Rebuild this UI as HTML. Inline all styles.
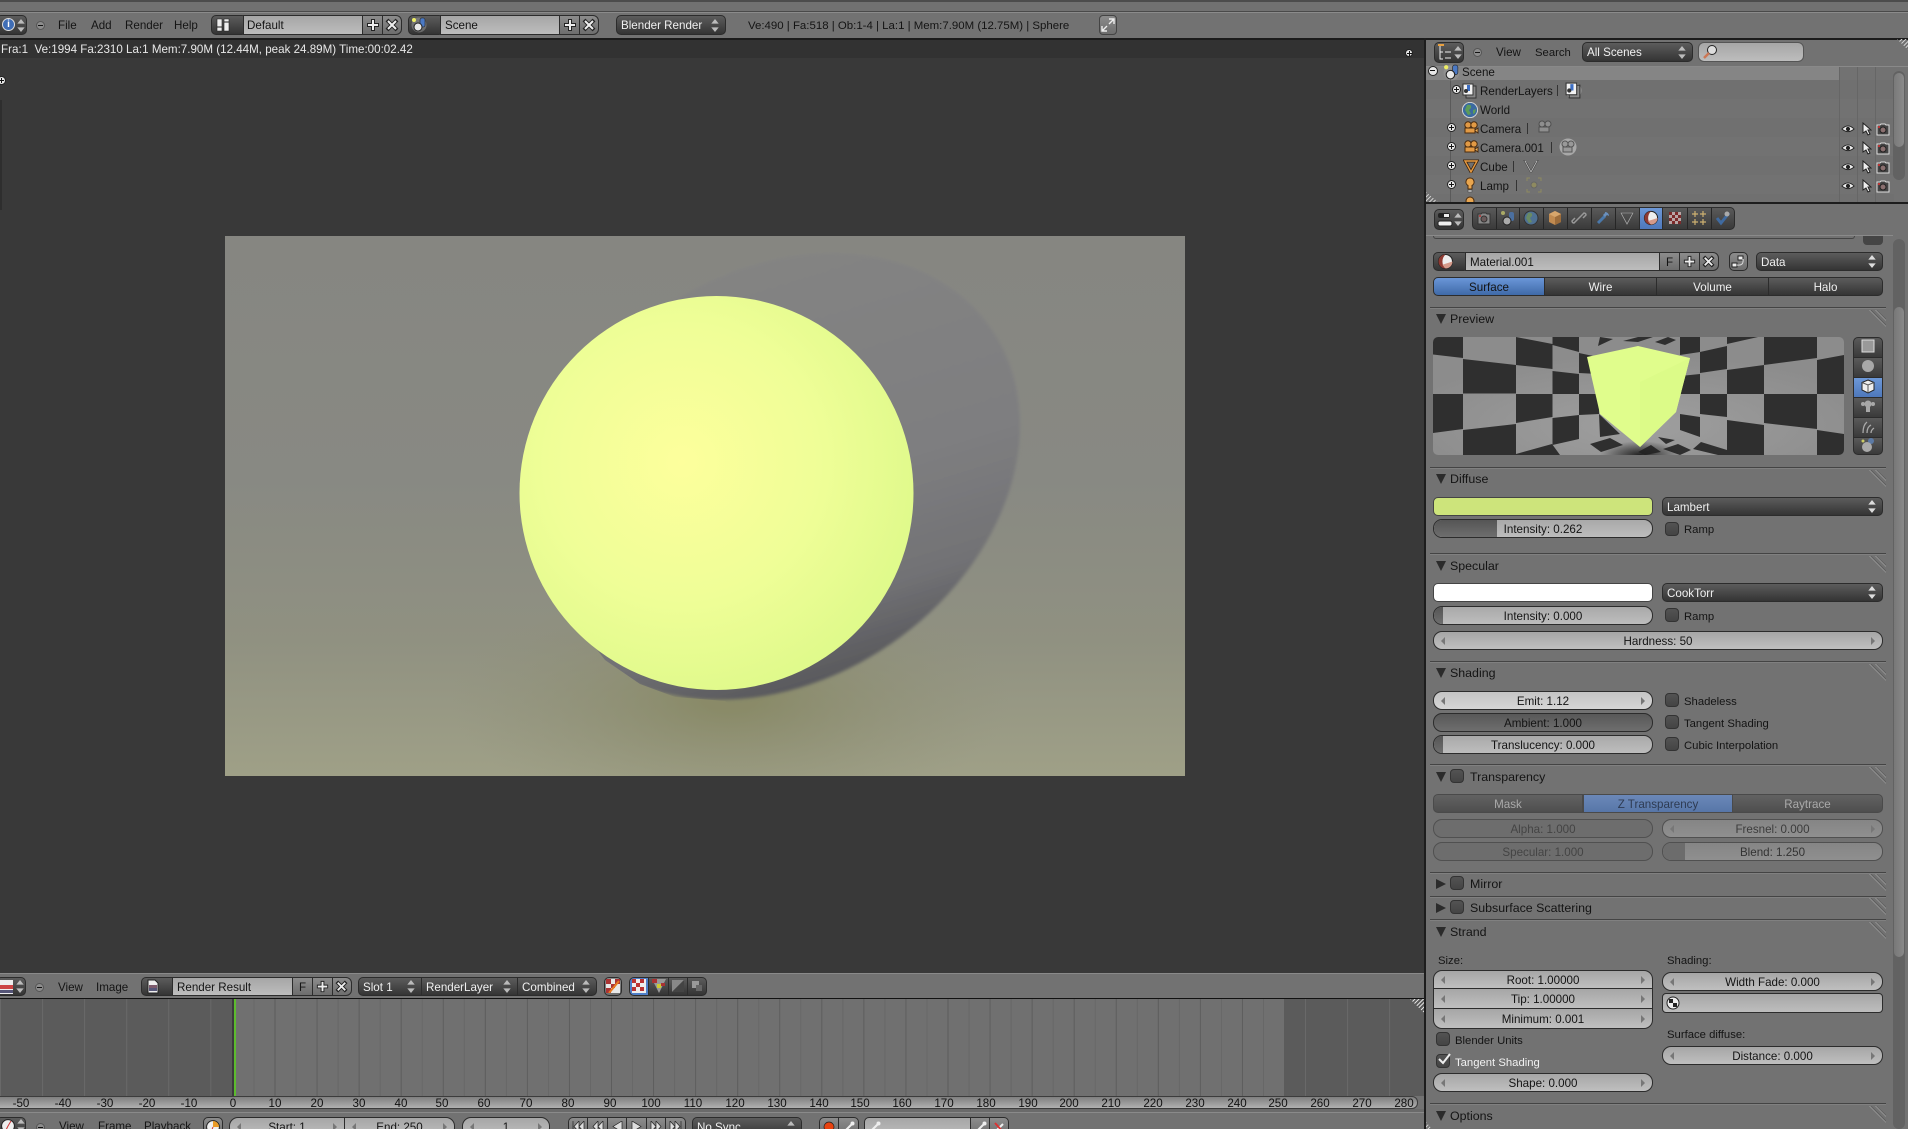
<!DOCTYPE html>
<html><head><meta charset="utf-8"><title>Blender</title>
<style>
html{margin:0;padding:0;overflow:hidden;width:1908px;height:1129px}
body{margin:0;padding:0;width:1908px;height:1129px;overflow:hidden;position:relative;background:#727272;font:11.6px/14px "Liberation Sans",sans-serif;color:#141414}
body *{position:absolute;box-sizing:border-box;white-space:nowrap}
svg *{position:static}
.t{height:14px}
.h{font-size:12.4px;margin-top:1px}
.k{font-size:11.3px;margin-top:1px}
.m{margin-top:2px}
.c{color:#f2f2f2}
.w{display:flex;align-items:center;justify-content:center;border:1px solid #2c2c2c;padding-top:2px}
.num{border-radius:9px;background:linear-gradient(#a6a6a6,#bfbfbf)}
.hi{background:linear-gradient(#c4c4c4,#d6d6d6)}
.sl{border-radius:9px;background:linear-gradient(#a9a9a9,#bdbdbd);overflow:hidden}
.sl b{left:0;top:0;bottom:0;background:linear-gradient(#555,#6e6e6e)}
.sl span{position:relative}
.dk{border-radius:5px;background:linear-gradient(#5c5c5c,#343434);color:#f0f0f0;justify-content:flex-start;padding-left:4px}
.fd{background:linear-gradient(#a6a6a6,#bdbdbd);justify-content:flex-start;padding-left:4px}
.bt{background:linear-gradient(#8c8c8c,#6d6d6d)}
.ck{width:14px;height:14px;border-radius:4px;border:1px solid #333;background:linear-gradient(#535353,#444)}
.sep{left:1430px;width:456px;height:1px;background:#444;box-shadow:0 1px 0 #808080}
.dn{width:0;height:0;border-left:5px solid transparent;border-right:5px solid transparent;border-top:10px solid #2b2b2b;left:1436px;margin-top:1px}
.rt{width:0;height:0;border-top:5px solid transparent;border-bottom:5px solid transparent;border-left:10px solid #2b2b2b;left:1436px;margin-top:1px}
.gr{left:1868px;width:18px;height:17px;background:repeating-linear-gradient(45deg,#8e8e8e 0 1px,#606060 1px 2px,transparent 2px 4.2px);clip-path:polygon(0 0,50% 0,100% 50%,100% 100%)}
.ar:before,.ar:after{content:"";position:absolute;top:50%;margin-top:-4px;border-top:4px solid transparent;border-bottom:4px solid transparent}
.ar:before{left:7px;border-right:4px solid #777}
.ar:after{right:7px;border-left:4px solid #777}
.r{top:1097px;width:40px;height:13px;line-height:14px;text-align:center;color:#111}
.row{left:1425px;width:468px;height:19px}
.dim{opacity:.55}
.pm{width:9px;height:9px;border-radius:50%;background:#e8e8e8;border:1px solid #222}
.pm:after{content:"";position:absolute;left:1px;top:3px;width:5px;height:1px;background:#111}
.pp:before{content:"";position:absolute;left:3px;top:1px;width:1px;height:5px;background:#111}
.ol{margin-top:1px}
</style></head>
<body>
<svg width="0" height="0" style="left:0;top:0">
<defs>
<symbol id="ud" viewBox="0 0 8 14"><path d="M4 0 8 5H0zM4 14 0 9h8z" fill="#ddd"/></symbol>
<symbol id="udk" viewBox="0 0 8 14"><path d="M4 0 8 5H0zM4 14 0 9h8z" fill="#bbb"/></symbol>
<symbol id="plus" viewBox="0 0 16 16"><path d="M8 2v12M2 8h12" stroke="#222" stroke-width="4"/><path d="M8 3v10M3 8h10" stroke="#eee" stroke-width="2"/></symbol>
<symbol id="x" viewBox="0 0 16 16"><path d="M3 3 13 13M13 3 3 13" stroke="#222" stroke-width="4"/><path d="M4 4 12 12M12 4 4 12" stroke="#eee" stroke-width="2"/></symbol>
<symbol id="eye" viewBox="0 0 16 10"><path d="M1 5Q8-2 15 5 8 11 1 5z" fill="#eee" stroke="#222"/><circle cx="8" cy="5" r="2.400" fill="#222"/></symbol>
<symbol id="cur" viewBox="0 0 10 14"><path d="M1 1v10l3-2 2 4 2-1-2-4h3z" fill="#eee" stroke="#222"/></symbol>
<symbol id="rcam" viewBox="0 0 14 14"><path d="M1 3h3l1-1h4l1 1h3v10H1z" fill="#444" stroke="#ddd"/><circle cx="7" cy="8" r="3" fill="#8a7070" stroke="#222"/><rect x="2" y="4" width="2" height="2" fill="#b33"/></symbol>
<symbol id="ocam" viewBox="0 0 16 14"><circle cx="5" cy="4" r="3.200" fill="#e29a45" stroke="#4a2c10"/><circle cx="11" cy="4" r="3.200" fill="#e29a45" stroke="#4a2c10"/><path d="M2 7h10v5H2z" fill="#e29a45" stroke="#4a2c10"/><path d="M12 9l3-2v5l-3-2z" fill="#f1b35f" stroke="#4a2c10"/></symbol>
<symbol id="scene" viewBox="0 0 16 16"><circle cx="8" cy="8" r="7.500" fill="#9a9a9a" opacity=".5"/><circle cx="3" cy="3" r="2" fill="#ee6"/><rect x="9" y="1" width="5" height="9" rx="2" fill="#4b79c4" stroke="#222" stroke-width=".6"/><circle cx="7" cy="10" r="4" fill="#e8e8e8" stroke="#222"/></symbol>
<symbol id="rl" viewBox="0 0 16 16"><rect x="4" y="3" width="10" height="12" fill="#888" stroke="#333"/><rect x="1" y="1" width="10" height="11" fill="#f2f2f2" stroke="#333"/><rect x="5" y="2" width="3" height="6" fill="#3d6fc4"/><circle cx="4" cy="8" r="2" fill="#333"/></symbol>
<symbol id="world" viewBox="0 0 16 16"><circle cx="8" cy="8" r="7.600" fill="#3b6aa0" stroke="#d5d5d5"/><path d="M5 3Q10 2 9 6L7 8 9 12 6 13 3 8z" fill="#5d9c58"/><path d="M11 8l3-1-1 4-2 1z" fill="#5d9c58"/></symbol>
<symbol id="tri" viewBox="0 0 16 14"><path d="M2 2h12L8 13z" fill="none" stroke="#3a2410" stroke-width="3"/><path d="M2 2h12L8 13z" fill="none" stroke="#e79b42" stroke-width="1.400"/></symbol>
<symbol id="tg" viewBox="0 0 16 14"><path d="M2 2h12L8 13z" fill="none" stroke="#444" stroke-width="2"/><path d="M2 2h12L8 13z" fill="none" stroke="#bbb" stroke-width=".8"/></symbol>
<symbol id="lamp" viewBox="0 0 10 16"><path d="M5 1a4 4 0 0 1 2 7.500V12H3V8.500A4 4 0 0 1 5 1z" fill="#e9a64f" stroke="#4a2c10"/><path d="M3 13h4v2H3z" fill="#ccc" stroke="#444" stroke-width=".6"/></symbol>
<symbol id="ball" viewBox="0 0 16 16"><circle cx="8" cy="8" r="6.600" fill="#eee" stroke="#222"/><path d="M8 1.400A6.600 6.600 0 0 0 1.400 8 6.600 6.600 0 0 0 8 14.600 9 9 0 0 1 8 1.400z" fill="#8f3a32"/><path d="M14.600 8A6.600 6.600 0 0 1 8 14.600L5 11z" fill="#d59a8a"/></symbol>
<symbol id="wfx" viewBox="0 0 16 16"><path d="M3 13 10 6" stroke="#5a8fd0" stroke-width="3"/><path d="M10 2a4 4 0 0 1 4 4l-2-1-2 2-2-2 2-2z" fill="#7ea9df"/></symbol>
</defs></svg>

<!-- window top -->
<div style="left:0;top:0;width:1908px;height:2px;background:#4c4c4c"></div>
<div style="left:0;top:2px;width:1908px;height:9px;background:#717171"></div>
<div style="left:0;top:11px;width:1908px;height:1px;background:#4a4a4a"></div>
<div style="left:0;top:12px;width:1908px;height:1px;background:#8b8b8b"></div>

<!-- top header -->
<div class="w dk" style="left:-4px;top:15px;width:31px;height:20px"></div>
<div style="left:2px;top:18px;width:13px;height:13px;border-radius:50%;background:#3f6db5;border:1px solid #ddd;color:#fff;font-weight:bold;font-size:10px;line-height:11px;text-align:center">i</div>
<svg style="left:17px;top:19px" width="8" height="13"><use href="#udk"/></svg>
<div class="pm" style="left:36px;top:21px;background:#8c8c8c;border-color:#555"></div>
<div class="t" style="left:58px;top:19px">File</div>
<div class="t" style="left:91px;top:19px">Add</div>
<div class="t" style="left:125px;top:19px">Render</div>
<div class="t" style="left:174px;top:19px">Help</div>

<div class="w dk" style="left:211px;top:15px;width:36px;height:20px"></div>
<svg style="left:216px;top:18px" width="14" height="14"><path d="M1 1h5v12H1zM8 1h5v12H8z" fill="#eee" stroke="#222" stroke-width=".6"/><path d="M1 9h5M8 4h5" stroke="#222"/></svg>
<div class="w fd" style="left:243px;top:15px;width:120px;height:20px;padding-left:3px">Default</div>
<div class="w bt" style="left:362px;top:15px;width:21px;height:20px"><svg style="left:2px;top:1px" width="16" height="16"><use href="#plus"/></svg></div>
<div class="w bt" style="left:382px;top:15px;width:20px;height:20px;border-radius:0 6px 6px 0"><svg style="left:1px;top:1px" width="16" height="16"><use href="#x"/></svg></div>

<div class="w dk" style="left:408px;top:15px;width:36px;height:20px"></div>
<svg style="left:411px;top:17px" width="16" height="16"><use href="#scene"/></svg>
<div class="w fd" style="left:440px;top:15px;width:120px;height:20px">Scene</div>
<div class="w bt" style="left:559px;top:15px;width:21px;height:20px"><svg style="left:2px;top:1px" width="16" height="16"><use href="#plus"/></svg></div>
<div class="w bt" style="left:579px;top:15px;width:20px;height:20px;border-radius:0 6px 6px 0"><svg style="left:1px;top:1px" width="16" height="16"><use href="#x"/></svg></div>

<div class="w dk" style="left:616px;top:15px;width:110px;height:20px">Blender Render<svg style="right:6px;top:3px" width="8" height="13"><use href="#udk"/></svg></div>
<div class="t" style="left:748px;top:19px;font-size:11.45px">Ve:490 | Fa:518 | Ob:1-4 | La:1 | Mem:7.90M (12.75M) | Sphere</div>
<div class="w bt" style="left:1099px;top:15px;width:18px;height:20px;border-radius:4px;border-color:#444"><svg style="left:1px;top:2px" width="14" height="14"><path d="M8 1h5v5M13 1 8 6M6 13H1V8M1 13l5-5" stroke="#eee" stroke-width="1.400" fill="none"/></svg></div>

<div style="left:0;top:38px;width:1908px;height:2px;background:#1b1b1b"></div>

<!-- image editor -->
<div style="left:0;top:40px;width:1424px;height:933px;background:#393939"></div>
<div style="left:0;top:40px;width:1424px;height:18px;background:#323232"></div>
<div class="t c" style="left:1px;top:43px;color:#e8e8e8">Fra:1&nbsp; Ve:1994 Fa:2310 La:1 Mem:7.90M (12.44M, peak 24.89M) Time:00:02.42</div>
<div class="pm pp" style="left:1405px;top:49px;width:8px;height:8px"></div>
<div class="pm pp" style="left:-3px;top:76px;width:9px;height:9px"></div>
<div style="left:0;top:100px;width:2px;height:110px;background:#2e2e2e"></div>

<!-- render -->
<svg style="left:225px;top:236px" width="960" height="540" viewBox="225 236 960 540">
<defs>
<linearGradient id="bg" x1="0" y1="0" x2="0" y2="1"><stop offset="0" stop-color="#868681"/><stop offset=".45" stop-color="#888983"/><stop offset=".75" stop-color="#909181"/><stop offset="1" stop-color="#9fa087"/></linearGradient>
<linearGradient id="sh" gradientUnits="userSpaceOnUse" x1="880" y1="260" x2="740" y2="702"><stop offset="0" stop-color="#848483"/><stop offset=".55" stop-color="#7e7e80"/><stop offset=".8" stop-color="#727275"/><stop offset="1" stop-color="#535357"/></linearGradient>
<radialGradient id="amb" gradientUnits="userSpaceOnUse" cx="0" cy="0" r="1" gradientTransform="translate(730 700) scale(280 120)"><stop offset=".1" stop-color="#85865f" stop-opacity=".75"/><stop offset="1" stop-color="#8f9078" stop-opacity="0"/></radialGradient>
<radialGradient id="sp" gradientUnits="userSpaceOnUse" cx="682" cy="462" r="250"><stop offset="0" stop-color="#fdff9c"/><stop offset=".55" stop-color="#effe97"/><stop offset="1" stop-color="#def98a"/></radialGradient>
<clipPath id="shc"><polygon points="578,625 605,660 640,684 675,697 725,701 800,760 1100,760 1100,240 578,240"/></clipPath>
<filter id="sb" x="-5%" y="-5%" width="110%" height="110%"><feGaussianBlur stdDeviation="1.500"/></filter>
</defs>
<rect x="225" y="236" width="960" height="540" fill="url(#bg)"/>
<rect x="225" y="560" width="960" height="216" fill="url(#amb)"/>
<g clip-path="url(#shc)"><ellipse cx="776" cy="476.500" rx="261" ry="203" transform="rotate(-34.500 776 476.500)" fill="url(#sh)" filter="url(#sb)"/></g>
<circle cx="716.500" cy="493" r="197" fill="url(#sp)"/>
</svg>

<!-- image editor header -->
<div style="left:0;top:973px;width:1424px;height:1px;background:#8a8a8a"></div>
<div style="left:0;top:974px;width:1424px;height:24px;background:#727272"></div>
<div class="w dk" style="left:-4px;top:977px;width:30px;height:19px"></div>
<svg style="left:0;top:980px" width="13" height="14"><rect width="13" height="14" fill="#eee"/><path d="M0 5h13v4H0z" fill="#c44"/><path d="M0 10h13v3H0z" fill="#557"/></svg>
<svg style="left:16px;top:980px" width="8" height="13"><use href="#udk"/></svg>
<div class="pm" style="left:35px;top:983px;background:#8c8c8c;border-color:#555"></div>
<div class="t" style="left:58px;top:981px">View</div>
<div class="t" style="left:96px;top:981px">Image</div>
<div class="w dk" style="left:141px;top:977px;width:36px;height:19px"></div>
<svg style="left:147px;top:979px" width="12" height="15"><path d="M1 1h7l3 3v10H1z" fill="#eee" stroke="#222"/><path d="M2 6h8v3H2z" fill="#7c5a6c"/><path d="M2 9h8v3H2z" fill="#557"/></svg>
<div class="w fd" style="left:172px;top:977px;width:121px;height:19px">Render Result</div>
<div class="w bt" style="left:292px;top:977px;width:21px;height:19px">F</div>
<div class="w bt" style="left:312px;top:977px;width:21px;height:19px"><svg style="left:2px;top:1px" width="15" height="15"><use href="#plus"/></svg></div>
<div class="w bt" style="left:332px;top:977px;width:20px;height:19px;border-radius:0 6px 6px 0"><svg style="left:1px;top:1px" width="15" height="15"><use href="#x"/></svg></div>
<div class="w dk" style="left:358px;top:977px;width:64px;height:19px;border-radius:5px 0 0 5px">Slot 1<svg style="right:6px;top:2px" width="8" height="13"><use href="#udk"/></svg></div>
<div class="w dk" style="left:421px;top:977px;width:97px;height:19px;border-radius:0">RenderLayer<svg style="right:6px;top:2px" width="8" height="13"><use href="#udk"/></svg></div>
<div class="w dk" style="left:517px;top:977px;width:80px;height:19px;border-radius:0 5px 5px 0">Combined<svg style="right:6px;top:2px" width="8" height="13"><use href="#udk"/></svg></div>
<div class="w bt" style="left:604px;top:977px;width:18px;height:19px;border-radius:5px"><svg style="left:1px;top:1px" width="14" height="14"><rect width="14" height="14" fill="#e8e8e8"/><path d="M0 0h5v5H0zM5 5h4v4H5zM0 9h5v5H0zM9 0h5v5H9z" fill="#a33"/><path d="M3 14 13 2" stroke="#e87a20" stroke-width="2"/></svg></div>
<div class="w" style="left:629px;top:977px;width:20px;height:19px;background:#4f7fc9;border-radius:5px 0 0 5px"><svg style="left:2px;top:1px" width="14" height="14"><rect width="14" height="14" fill="#eee"/><path d="M0 0h4v4H0zM8 0h4v4H8zM4 4h4v4H4zM0 8h4v4H0zM8 8h4v4H8z" fill="#b33"/></svg></div>
<div class="w dk" style="left:648px;top:977px;width:21px;height:19px;border-radius:0"><svg style="left:3px;top:1px" width="14" height="14"><path d="M0 0h14L7 14z" fill="#999"/><path d="M0 0h5v4H0zM9 4h4v3H9z" fill="#a33"/><path d="M5 5h4v4H5z" fill="#cc3"/></svg></div>
<div class="w dk" style="left:668px;top:977px;width:20px;height:19px;border-radius:0"><svg style="left:2px;top:1px" width="14" height="14"><path d="M1 13V1h12z" fill="#888"/><path d="M13 1v12H1z" fill="#444"/></svg></div>
<div class="w dk" style="left:687px;top:977px;width:20px;height:19px;border-radius:0 5px 5px 0"><svg style="left:2px;top:1px" width="14" height="14"><rect x="2" y="2" width="7" height="7" fill="#999"/><rect x="6" y="6" width="6" height="6" fill="#666"/></svg></div>
<div style="left:0;top:998px;width:1424px;height:1px;background:#111"></div>

<!-- timeline -->
<div style="left:0;top:999px;width:233px;height:97px;background:#5b5b5b linear-gradient(90deg,#696969 1px,transparent 1px) 0 0/42.070px 100%"></div>
<div style="left:233px;top:999px;width:1051px;height:97px;background-color:#707070;background-image:linear-gradient(90deg,#5d5d5d 1px,transparent 1px),linear-gradient(90deg,#676767 1px,transparent 1px);background-size:42.070px 100%,42.070px 100%;background-position:41.500px 0,20.500px 0"></div>
<div style="left:1284px;top:999px;width:140px;height:97px;background:#5b5b5b linear-gradient(90deg,#696969 1px,transparent 1px) 21px 0/42.070px 100%"></div>
<div style="left:232px;top:999px;width:2px;height:97px;background:#3c3c3c"></div>
<div style="left:234px;top:999px;width:2px;height:97px;background:#5dbb2e"></div>
<div class="w" style="left:-8px;top:1096px;width:1426px;height:13px;border-radius:6px;background:linear-gradient(#7f7f7f,#b0b0b0);border-color:#3c3c3c"></div>
<div class="r" style="left:1px">-50</div><div class="r" style="left:43px">-40</div><div class="r" style="left:85px">-30</div><div class="r" style="left:127px">-20</div><div class="r" style="left:169px">-10</div><div class="r" style="left:213px">0</div>
<div class="r" style="left:255px">10</div><div class="r" style="left:297px">20</div><div class="r" style="left:339px">30</div><div class="r" style="left:381px">40</div><div class="r" style="left:422px">50</div><div class="r" style="left:464px">60</div><div class="r" style="left:506px">70</div><div class="r" style="left:548px">80</div><div class="r" style="left:590px">90</div><div class="r" style="left:631px">100</div><div class="r" style="left:673px">110</div><div class="r" style="left:715px">120</div><div class="r" style="left:757px">130</div><div class="r" style="left:799px">140</div><div class="r" style="left:840px">150</div><div class="r" style="left:882px">160</div><div class="r" style="left:924px">170</div><div class="r" style="left:966px">180</div><div class="r" style="left:1008px">190</div><div class="r" style="left:1049px">200</div><div class="r" style="left:1091px">210</div><div class="r" style="left:1133px">220</div><div class="r" style="left:1175px">230</div><div class="r" style="left:1217px">240</div><div class="r" style="left:1258px">250</div><div class="r" style="left:1300px">260</div><div class="r" style="left:1342px">270</div><div class="r" style="left:1384px">280</div>
<div style="left:0;top:1109px;width:1424px;height:5px;background:#6a6a6a"></div>
<div style="left:0;top:1112px;width:1424px;height:1px;background:#8a8a8a"></div>
<div style="left:0;top:1113px;width:1424px;height:16px;background:#727272"></div>
<div class="w dk" style="left:-4px;top:1117px;width:30px;height:20px"></div>
<svg style="left:1px;top:1119px" width="14" height="14"><circle cx="7" cy="7" r="6.400" fill="#eee" stroke="#222"/><path d="M7 7 10 2M7 7 5 11" stroke="#c33"/></svg>
<svg style="left:17px;top:1119px" width="8" height="13"><use href="#udk"/></svg>
<div class="pm" style="left:36px;top:1123px;background:#8c8c8c;border-color:#555"></div>
<div class="t" style="left:59px;top:1120px">View</div>
<div class="t" style="left:98px;top:1120px">Frame</div>
<div class="t" style="left:144px;top:1120px">Playback</div>
<div class="w bt" style="left:203px;top:1117px;width:20px;height:20px;border-radius:5px"><svg style="left:2px;top:2px" width="14" height="14"><circle cx="7" cy="7" r="6.400" fill="#eee" stroke="#222"/><path d="M7 7V1a6 6 0 0 1 6 6z" fill="#ea9a25"/><path d="M7 7 5 12" stroke="#c33"/></svg></div>
<div class="w num ar" style="left:229px;top:1117px;width:116px;height:20px;border-radius:9px 0 0 9px">Start: 1</div>
<div class="w num ar" style="left:344px;top:1117px;width:111px;height:20px;border-radius:0 9px 9px 0">End: 250</div>
<div class="w num ar" style="left:462px;top:1117px;width:88px;height:20px">1</div>
<div class="w bt" style="left:568px;top:1117px;width:20px;height:20px;border-radius:5px 0 0 5px"><svg style="left:3px;top:3px" width="13" height="11"><path d="M1 0v11M12 0 7 5.500 12 11zM7 0 2 5.500 7 11z" fill="#ddd" stroke="#222" stroke-width=".7"/></svg></div>
<div class="w bt" style="left:587px;top:1117px;width:21px;height:20px"><svg style="left:3px;top:3px" width="13" height="11"><path d="M7 0 2 5.500 7 11zM12 0 7 5.500 12 11z" fill="#ddd" stroke="#222" stroke-width=".7"/></svg></div>
<div class="w bt" style="left:607px;top:1117px;width:20px;height:20px"><svg style="left:4px;top:3px" width="11" height="11"><path d="M10 0 1 5.500 10 11z" fill="#ddd" stroke="#222" stroke-width=".7"/></svg></div>
<div class="w bt" style="left:626px;top:1117px;width:21px;height:20px"><svg style="left:4px;top:3px" width="11" height="11"><path d="M1 0 10 5.500 1 11z" fill="#ddd" stroke="#222" stroke-width=".7"/></svg></div>
<div class="w bt" style="left:646px;top:1117px;width:20px;height:20px"><svg style="left:3px;top:3px" width="13" height="11"><path d="M1 0 6 5.500 1 11zM6 0l5 5.500L6 11z" fill="#ddd" stroke="#222" stroke-width=".7"/></svg></div>
<div class="w bt" style="left:665px;top:1117px;width:21px;height:20px;border-radius:0 5px 5px 0"><svg style="left:3px;top:3px" width="13" height="11"><path d="M12 0v11M1 0 6 5.500 1 11zM6 0l5 5.500L6 11z" fill="#ddd" stroke="#222" stroke-width=".7"/></svg></div>
<div class="w dk" style="left:692px;top:1117px;width:110px;height:20px;padding-top:1px">No Sync<svg style="right:6px;top:3px" width="8" height="13"><use href="#udk"/></svg></div>
<div class="w bt" style="left:819px;top:1117px;width:20px;height:20px;border-radius:5px 0 0 5px"><svg style="left:3px;top:3px" width="12" height="12"><circle cx="6" cy="6" r="5" fill="#e8420f" stroke="#222" stroke-width=".7"/></svg></div>
<div class="w bt" style="left:838px;top:1117px;width:21px;height:20px;border-radius:0 5px 5px 0"><svg style="left:3px;top:3px" width="13" height="13"><path d="M2 11 10 3" stroke="#eee" stroke-width="2"/><circle cx="10.500" cy="2.500" r="2" fill="#eee"/><circle cx="2.500" cy="10.500" r="2" fill="none" stroke="#eee"/></svg></div>
<div class="w fd" style="left:864px;top:1117px;width:107px;height:20px;border-radius:5px 0 0 5px"><svg style="left:3px;top:3px" width="13" height="13"><path d="M2 11 10 3" stroke="#eee" stroke-width="2"/><circle cx="10.500" cy="2.500" r="2" fill="#eee"/><circle cx="2.500" cy="10.500" r="2" fill="none" stroke="#eee"/></svg></div>
<div class="w bt" style="left:970px;top:1117px;width:20px;height:20px"><svg style="left:3px;top:3px" width="13" height="13"><path d="M2 11 10 3" stroke="#eee" stroke-width="2"/><circle cx="10.500" cy="2.500" r="2" fill="#eee"/></svg></div>
<div class="w bt" style="left:989px;top:1117px;width:20px;height:20px;border-radius:0 5px 5px 0"><svg style="left:3px;top:3px" width="13" height="13"><path d="M2 11 10 3" stroke="#eee" stroke-width="2"/><path d="M2 2 11 12" stroke="#d33" stroke-width="2"/></svg></div>

<!-- hatch corners -->
<div style="left:1410px;top:999px;width:14px;height:14px;background:repeating-linear-gradient(135deg,#ddd 0 1px,transparent 1px 3px);clip-path:polygon(0 0,100% 0,100% 100%)"></div>

<!-- column divider -->
<div style="left:1424px;top:38px;width:2px;height:1091px;background:#1d1d1d"></div>

<!-- outliner -->
<div style="left:1426px;top:40px;width:482px;height:162px;background:#727272"></div>
<div style="left:1426px;top:66px;width:482px;height:1px;background:#898989"></div>
<div class="row" style="top:67px;left:1426px;width:414px;height:13px;background:#858585"></div>
<div class="row" style="top:80px;left:1426px;height:19px;background:#707070"></div>
<div class="row" style="top:118px;left:1426px;background:#707070"></div>
<div class="row" style="top:156px;left:1426px;background:#707070"></div>
<div class="row" style="top:194px;left:1426px;height:8px;background:#707070"></div>
<div style="left:1839px;top:67px;width:1px;height:135px;background:#666"></div>
<div style="left:1857px;top:67px;width:1px;height:135px;background:#666"></div>
<div style="left:1875px;top:67px;width:1px;height:135px;background:#666"></div>
<div class="w dk" style="left:1434px;top:42px;width:30px;height:21px"></div>
<svg style="left:1437px;top:44px" width="16" height="17"><path d="M1 1h6" stroke="#e8a040" stroke-width="2"/><path d="M3 2v13h3M3 8h3M8 8h6M8 14h6" stroke="#eee" fill="none"/></svg>
<svg style="left:1454px;top:46px" width="8" height="13"><use href="#udk"/></svg>
<div class="pm" style="left:1473px;top:48px;background:#8c8c8c;border-color:#555"></div>
<div class="t" style="left:1496px;top:46px">View</div>
<div class="t" style="left:1535px;top:46px;font-size:11.3px">Search</div>
<div class="w dk" style="left:1582px;top:42px;width:111px;height:20px">All Scenes<svg style="right:6px;top:3px" width="8" height="13"><use href="#udk"/></svg></div>
<div class="w fd" style="left:1698px;top:42px;width:106px;height:20px;border-radius:6px;border-color:#555"><svg style="left:3px;top:1px" width="16" height="16"><circle cx="10" cy="6" r="4.500" fill="#ddd" stroke="#222"/><path d="M7 9 2 14" stroke="#c75" stroke-width="2.500"/></svg></div>

<div style="left:1450px;top:76px;width:1px;height:126px;background:#5a5a5a"></div>
<div class="pm" style="left:1428px;top:66px;width:10px;height:10px"></div>
<svg style="left:1443px;top:64px" width="17" height="17"><use href="#scene"/></svg>
<div class="t ol" style="left:1462px;top:65px">Scene</div>
<div class="pm pp" style="left:1452px;top:85px"></div>
<svg style="left:1462px;top:83px" width="16" height="16"><use href="#rl"/></svg>
<div class="t ol" style="left:1480px;top:84px">RenderLayers</div>
<div style="left:1557px;top:85px;width:1px;height:11px;background:#333"></div>
<svg style="left:1565px;top:82px" width="17" height="17"><circle cx="8.500" cy="8.500" r="8" fill="#9c9c9c"/><use href="#rl"/></svg>
<svg style="left:1462px;top:102px" width="16" height="16"><use href="#world"/></svg>
<div class="t ol" style="left:1480px;top:103px">World</div>
<div class="pm pp" style="left:1447px;top:123px"></div>
<svg style="left:1463px;top:121px" width="16" height="14"><use href="#ocam"/></svg>
<div class="t ol" style="left:1480px;top:122px">Camera</div>
<div style="left:1527px;top:123px;width:1px;height:11px;background:#333"></div>
<svg style="left:1537px;top:120px;opacity:.75" width="17" height="16"><path d="M2 7h10v5H2z" fill="#999" stroke="#444"/><circle cx="5" cy="4" r="3" fill="#999" stroke="#444"/><circle cx="11" cy="4" r="3" fill="#999" stroke="#444"/></svg>
<div class="pm pp" style="left:1447px;top:142px"></div>
<svg style="left:1463px;top:140px" width="16" height="14"><use href="#ocam"/></svg>
<div class="t ol" style="left:1480px;top:141px">Camera.001</div>
<div style="left:1551px;top:142px;width:1px;height:11px;background:#333"></div>
<svg style="left:1559px;top:138px" width="18" height="18"><circle cx="9" cy="9" r="8.500" fill="#a8a8a8"/><path d="M4 9h9v5H4z" fill="#999" stroke="#555"/><circle cx="6" cy="6" r="3" fill="#999" stroke="#555"/><circle cx="12" cy="6" r="3" fill="#999" stroke="#555"/></svg>
<div class="pm pp" style="left:1447px;top:161px"></div>
<svg style="left:1463px;top:159px" width="16" height="14"><use href="#tri"/></svg>
<div class="t ol" style="left:1480px;top:160px">Cube</div>
<div style="left:1513px;top:161px;width:1px;height:11px;background:#333"></div>
<svg style="left:1523px;top:159px" width="16" height="14"><use href="#tg"/></svg>
<div class="pm pp" style="left:1447px;top:180px"></div>
<svg style="left:1465px;top:177px" width="10" height="16"><use href="#lamp"/></svg>
<div class="t ol" style="left:1480px;top:179px">Lamp</div>
<div style="left:1516px;top:180px;width:1px;height:11px;background:#333"></div>
<svg style="left:1526px;top:177px" width="16" height="16"><path d="M1 4V1h3M12 1h3v3M15 12v3h-3M4 15H1v-3" stroke="#8e8a60" fill="none"/><circle cx="8" cy="8" r="3" fill="#8e8a60" stroke="#666"/></svg>
<svg style="left:1465px;top:196px" width="10" height="6"><circle cx="5" cy="5" r="4" fill="#e9a64f" stroke="#4a2c10"/></svg>
<svg style="left:1841px;top:124px" width="14" height="10"><use href="#eye"/></svg>
<svg style="left:1862px;top:122px" width="10" height="14"><use href="#cur"/></svg>
<svg style="left:1876px;top:122px" width="14" height="14"><use href="#rcam"/></svg>
<svg style="left:1841px;top:143px" width="14" height="10"><use href="#eye"/></svg>
<svg style="left:1862px;top:141px" width="10" height="14"><use href="#cur"/></svg>
<svg style="left:1876px;top:141px" width="14" height="14"><use href="#rcam"/></svg>
<svg style="left:1841px;top:162px" width="14" height="10"><use href="#eye"/></svg>
<svg style="left:1862px;top:160px" width="10" height="14"><use href="#cur"/></svg>
<svg style="left:1876px;top:160px" width="14" height="14"><use href="#rcam"/></svg>
<svg style="left:1841px;top:181px" width="14" height="10"><use href="#eye"/></svg>
<svg style="left:1862px;top:179px" width="10" height="14"><use href="#cur"/></svg>
<svg style="left:1876px;top:179px" width="14" height="14"><use href="#rcam"/></svg>
<div style="left:1893px;top:71px;width:12px;height:109px;border-radius:6px;background:#626262"></div>
<div style="left:1894px;top:73px;width:10px;height:74px;border-radius:5px;background:linear-gradient(90deg,#7a7a7a,#8a8a8a)"></div>
<div style="left:1426px;top:192px;width:12px;height:10px;background:repeating-linear-gradient(135deg,#ccc 0 1px,transparent 1px 3px);clip-path:polygon(0 0,100% 100%,0 100%)"></div>
<div style="left:1897px;top:39px;width:11px;height:11px;background:repeating-linear-gradient(135deg,#ccc 0 1px,transparent 1px 3px);clip-path:polygon(0 0,100% 0,100% 100%)"></div>

<!-- properties -->
<div style="left:1426px;top:202px;width:482px;height:2px;background:#1d1d1d"></div>
<div class="w dk" style="left:1434px;top:209px;width:30px;height:21px"></div>
<svg style="left:1437px;top:212px" width="16" height="15"><rect x="1" y="1" width="12" height="5" rx="2" fill="#222"/><rect x="7" y="2" width="5" height="3" fill="#eee"/><rect x="1" y="9" width="14" height="5" rx="2" fill="#eee" stroke="#222"/></svg>
<svg style="left:1454px;top:213px" width="8" height="13"><use href="#udk"/></svg>
<div class="w dk" style="left:1472px;top:207px;width:263px;height:23px;background:linear-gradient(#5a5a5a,#3a3a3a)"></div>
<div style="left:1639px;top:207px;width:24px;height:23px;background:linear-gradient(#6d98d8,#4e78bb);border:1px solid #2c2c2c"></div>
<div style="left:1496px;top:208px;width:1px;height:21px;background:#262626"></div><div style="left:1519px;top:208px;width:1px;height:21px;background:#262626"></div><div style="left:1543px;top:208px;width:1px;height:21px;background:#262626"></div><div style="left:1567px;top:208px;width:1px;height:21px;background:#262626"></div><div style="left:1591px;top:208px;width:1px;height:21px;background:#262626"></div><div style="left:1615px;top:208px;width:1px;height:21px;background:#262626"></div><div style="left:1687px;top:208px;width:1px;height:21px;background:#262626"></div><div style="left:1711px;top:208px;width:1px;height:21px;background:#262626"></div>
<svg style="left:1477px;top:211px" width="14" height="14"><path d="M1 3h3l1-1h4l1 1h3v10H1z" fill="#888" stroke="#333"/><circle cx="7" cy="8" r="3" fill="#6a5a5a" stroke="#333"/><rect x="2" y="4" width="2" height="2" fill="#a44"/></svg>
<svg style="left:1500px;top:210px" width="16" height="16"><circle cx="3" cy="3" r="2" fill="#aa6"/><rect x="9" y="2" width="5" height="9" rx="2" fill="#4b6f9f"/><circle cx="7" cy="11" r="4" fill="#aaa" stroke="#222"/></svg>
<svg style="left:1523px;top:210px" width="16" height="16"><circle cx="8" cy="8" r="7" fill="#4f7193" stroke="#333"/><path d="M5 3Q10 2 9 6L7 8 9 12 6 13 3 8z" fill="#698a62"/></svg>
<svg style="left:1547px;top:210px" width="16" height="16"><path d="M8 1 14 4v8l-6 3-6-3V4z" fill="#c08a50"/><path d="M8 7 14 4v8l-6 3z" fill="#9c6c3b"/><path d="M8 1 14 4 8 7 2 4z" fill="#d7a66c"/></svg>
<svg style="left:1571px;top:210px" width="16" height="16"><path d="M6 10 3 13a2 2 0 0 1-2-2l3-3M10 6l3-3a2 2 0 0 1 2 2l-3 3M5 11l6-6" stroke="#999" stroke-width="1.500" fill="none"/></svg>
<svg style="left:1595px;top:210px" width="16" height="16"><path d="M3 13 10 6" stroke="#4a78aa" stroke-width="3"/><path d="M10 2a4 4 0 0 1 4 4l-2-1-2 2-2-2 2-2z" fill="#6a90bd"/></svg>
<svg style="left:1619px;top:211px;opacity:.8" width="16" height="14"><use href="#tg"/></svg>
<svg style="left:1643px;top:210px" width="16" height="16"><use href="#ball"/></svg>
<svg style="left:1667px;top:210px" width="16" height="16"><rect x="2" y="2" width="12" height="12" fill="#b8a5a5"/><path d="M2 2h3v3H2zM8 2h3v3H8zM5 5h3v3H5zM11 5h3v3h-3zM2 8h3v3H2zM8 8h3v3H8zM5 11h3v3H5zM11 11h3v3h-3z" fill="#7c2a2a"/></svg>
<svg style="left:1691px;top:210px" width="16" height="16"><path d="M4 1v6M1 4h6M12 1v6M9 4h6M4 9v6M1 12h6M12 9v6M9 12h6" stroke="#cdb070" stroke-width="1.200"/></svg>
<svg style="left:1715px;top:210px" width="16" height="16"><path d="M2 8 6 13 14 3" stroke="#3f6aa0" stroke-width="3" fill="none"/><circle cx="12" cy="4" r="2.500" fill="#aaa"/></svg>

<div style="left:1426px;top:235px;width:467px;height:1px;background:#8a8a8a"></div>
<div style="left:1433px;top:236px;width:422px;height:3px;border:1px solid #444;border-top:0;border-radius:0 0 4px 4px"></div>
<div style="left:1863px;top:236px;width:20px;height:9px;background:#454545;border-radius:0 0 4px 4px"></div>

<!-- scrollbar -->
<div style="left:1893px;top:239px;width:12px;height:890px;border-radius:6px;background:#626262"></div>
<div style="left:1894px;top:307px;width:10px;height:650px;border-radius:5px;background:linear-gradient(90deg,#787878,#888)"></div>

<!-- material row -->
<div class="w dk" style="left:1433px;top:252px;width:36px;height:19px"></div>
<svg style="left:1437px;top:253px" width="17" height="17"><use href="#ball"/></svg>
<div class="w fd" style="left:1465px;top:252px;width:195px;height:19px">Material.001</div>
<div class="w bt" style="left:1659px;top:252px;width:21px;height:19px">F</div>
<div class="w bt" style="left:1679px;top:252px;width:21px;height:19px"><svg style="left:2px;top:1px" width="15" height="15"><use href="#plus"/></svg></div>
<div class="w bt" style="left:1699px;top:252px;width:20px;height:19px;border-radius:0 6px 6px 0"><svg style="left:1px;top:1px" width="15" height="15"><use href="#x"/></svg></div>
<div class="w bt" style="left:1729px;top:252px;width:19px;height:19px;border-radius:5px"><svg style="left:1px;top:1px" width="15" height="15"><path d="M7 2h5v4H7zM1 9h5v4H1z" fill="#eee" stroke="#222"/><path d="M12 5q1 7-6 6" fill="none" stroke="#dcdcdc"/></svg></div>
<div class="w dk" style="left:1756px;top:252px;width:127px;height:19px">Data<svg style="right:6px;top:2px" width="8" height="13"><use href="#ud"/></svg></div>
<div class="w" style="left:1433px;top:277px;width:112px;height:19px;border-radius:5px 0 0 5px;background:linear-gradient(#6a96d8,#3f6aa8)">Surface</div>
<div class="w dk" style="left:1544px;top:277px;width:113px;height:19px;border-radius:0;justify-content:center;padding-left:0">Wire</div>
<div class="w dk" style="left:1656px;top:277px;width:113px;height:19px;border-radius:0;justify-content:center;padding-left:0">Volume</div>
<div class="w dk" style="left:1768px;top:277px;width:115px;height:19px;border-radius:0 5px 5px 0;justify-content:center;padding-left:0">Halo</div>

<!-- Preview -->
<div class="sep" style="top:307px"></div>
<div class="dn" style="top:313px"></div><div class="t h" style="left:1450px;top:311px">Preview</div><div class="gr" style="top:310px"></div>
<svg style="left:1433px;top:337px;border-radius:5px" width="411" height="118" viewBox="0 0 411 118">
<defs><radialGradient id="pv" cx=".5" cy=".75" r=".6"><stop offset="0" stop-color="#9f9f9f"/><stop offset="1" stop-color="#8c8c8c"/></radialGradient>
<radialGradient id="fl" gradientUnits="userSpaceOnUse" cx="0" cy="0" r="1" gradientTransform="translate(207 118) scale(40 14)"><stop offset="0" stop-color="#222"/><stop offset="1" stop-color="#222" stop-opacity="0"/></radialGradient></defs>
<rect width="411" height="118" fill="url(#pv)"/>
<g fill="#2f2f2f">
<path d="M0 0H30V21L0 17.500zM30 22 83 28V56.500H30zM83 0 119.500 7V32L83 28zM119.500 0H146V15L119.500 8zM119.500 34 146 37V57H119.500zM146 16 165 20V37L146 36zM0 57H30V92L0 96zM83 57H119.500V80L83 86zM30 93 83 87V118H30zM119.500 81 146 78V102L119.500 108zM146 57H166V77L146 78zM166 77 187 97 167 100zM83 117 119 107 127 118H83zM157 107 177 101 190 108 168 115zM165 9 180 2 167 0z"/>
<path d="M247 0H267V15L247 18zM267 15 294 9V32L267 36zM294 0H325L294 7zM331 0H384V21L331 28zM384 23 411 18V57H384zM294 33 331 28V57H294zM247 39 267 37V57H247zM267 57H294V80L267 77zM331 57H384V92L331 86zM247 77 267 80V100L247 93zM294 83 331 88V118H294L294 107zM384 93 411 97V118H384zM260 112 268 105 294 113V118H285zM225 100 242 103 233 107zM230 112 245 107 258 113 247 118zM205 115 218 108 228 115 212 118zM190 4 205 0 220 0 205 5zM222 5 235 0 243 3 232 8z"/>
</g>
<ellipse cx="207" cy="118" rx="40" ry="14" fill="url(#fl)"/>
<path d="M154 20 205 9 257 21 243 75 207 110 167 77z" fill="#e0fd8c"/>
<path d="M207 45 257 21 243 75 207 110z" fill="#dcfb88"/>
</svg>
<div class="w" style="left:1853px;top:337px;width:30px;height:21px;border-radius:5px 5px 0 0;background:linear-gradient(#5a5a5a,#3a3a3a)"><svg style="left:7px;top:1px" width="14" height="14"><rect x="1" y="1" width="12" height="12" fill="#999" stroke="#ddd"/></svg></div>
<div class="w" style="left:1853px;top:357px;width:30px;height:21px;background:linear-gradient(#5a5a5a,#3a3a3a)"><svg style="left:7px;top:1px" width="14" height="14"><circle cx="7" cy="7" r="6" fill="#a8a8a8"/></svg></div>
<div class="w" style="left:1853px;top:377px;width:30px;height:21px;background:linear-gradient(#6d98d8,#4e78bb)"><svg style="left:7px;top:1px" width="14" height="15"><path d="M7 1 13 3.500V11L7 14 1 11V3.500z" fill="#eee" stroke="#222"/><path d="M1 3.500 7 6 13 3.500M7 6V14" stroke="#555" fill="none"/></svg></div>
<div class="w" style="left:1853px;top:397px;width:30px;height:21px;background:linear-gradient(#5a5a5a,#3a3a3a)"><svg style="left:6px;top:1px" width="16" height="15"><circle cx="8" cy="5" r="3.500" fill="#a8a8a8"/><circle cx="3" cy="5" r="2" fill="#a8a8a8"/><circle cx="13" cy="5" r="2" fill="#a8a8a8"/><path d="M6 8h4v5H6z" fill="#a8a8a8"/></svg></div>
<div class="w" style="left:1853px;top:417px;width:30px;height:21px;background:linear-gradient(#5a5a5a,#3a3a3a)"><svg style="left:7px;top:1px" width="14" height="15"><path d="M2 14Q2 6 6 3M6 14Q6 8 10 6M10 14Q10 11 13 9" stroke="#aaa" stroke-width="1.300" fill="none"/></svg></div>
<div class="w" style="left:1853px;top:437px;width:30px;height:18px;border-radius:0 0 5px 5px;background:linear-gradient(#5a5a5a,#3a3a3a)"><svg style="left:7px;top:0" width="15" height="15"><circle cx="2" cy="3" r="1.500" fill="#cc6"/><circle cx="10" cy="3" r="3" fill="#5c7aa5"/><circle cx="6" cy="9" r="5" fill="#aaa"/></svg></div>

<!-- Diffuse -->
<div class="sep" style="top:467px"></div>
<div class="dn" style="top:473px"></div><div class="t h" style="left:1450px;top:471px">Diffuse</div><div class="gr" style="top:470px"></div>
<div class="w" style="left:1433px;top:497px;width:220px;height:19px;border-radius:5px;background:#cde47b;border-color:#444"></div>
<div class="w dk" style="left:1662px;top:497px;width:221px;height:19px">Lambert<svg style="right:6px;top:2px" width="8" height="13"><use href="#ud"/></svg></div>
<div class="w sl" style="left:1433px;top:519px;width:220px;height:19px"><b style="width:63px"></b><span>Intensity: 0.262</span></div>
<div class="ck" style="left:1665px;top:522px"></div><div class="t k" style="left:1684px;top:522px">Ramp</div>

<!-- Specular -->
<div class="sep" style="top:553px"></div>
<div class="dn" style="top:560px"></div><div class="t h" style="left:1450px;top:558px">Specular</div><div class="gr" style="top:556px"></div>
<div class="w" style="left:1433px;top:583px;width:220px;height:19px;border-radius:5px;background:#fff;border-color:#444"></div>
<div class="w dk" style="left:1662px;top:583px;width:221px;height:19px">CookTorr<svg style="right:6px;top:2px" width="8" height="13"><use href="#ud"/></svg></div>
<div class="w sl" style="left:1433px;top:606px;width:220px;height:19px"><b style="width:9px"></b><span>Intensity: 0.000</span></div>
<div class="ck" style="left:1665px;top:608px"></div><div class="t k" style="left:1684px;top:609px">Ramp</div>
<div class="w num ar" style="left:1433px;top:631px;width:450px;height:19px">Hardness: 50</div>

<!-- Shading -->
<div class="sep" style="top:661px"></div>
<div class="dn" style="top:667px"></div><div class="t h" style="left:1450px;top:665px">Shading</div><div class="gr" style="top:664px"></div>
<div class="w num hi ar" style="left:1433px;top:691px;width:220px;height:19px">Emit: 1.12</div>
<div class="w sl" style="left:1433px;top:713px;width:220px;height:19px;background:linear-gradient(#585858,#6e6e6e)"><span>Ambient: 1.000</span></div>
<div class="w sl" style="left:1433px;top:735px;width:220px;height:19px"><b style="width:9px"></b><span>Translucency: 0.000</span></div>
<div class="ck" style="left:1665px;top:693px"></div><div class="t k" style="left:1684px;top:694px">Shadeless</div>
<div class="ck" style="left:1665px;top:715px"></div><div class="t k" style="left:1684px;top:716px">Tangent Shading</div>
<div class="ck" style="left:1665px;top:737px"></div><div class="t k" style="left:1684px;top:738px">Cubic Interpolation</div>

<!-- Transparency -->
<div class="sep" style="top:764px"></div>
<div class="dn" style="top:771px"></div><div class="ck" style="left:1450px;top:769px"></div><div class="t h" style="left:1470px;top:769px">Transparency</div><div class="gr" style="top:767px"></div>
<div class="w" style="left:1433px;top:794px;width:150px;height:19px;border-radius:5px 0 0 5px;background:linear-gradient(#626262,#4e4e4e);border-color:#4a4a4a;color:#aaa">Mask</div>
<div class="w" style="left:1583px;top:794px;width:150px;height:19px;background:linear-gradient(#6b88b8,#5776a8);border-color:#4a4a4a;color:#2e3b52">Z Transparency</div>
<div class="w" style="left:1732px;top:794px;width:151px;height:19px;border-radius:0 5px 5px 0;background:linear-gradient(#626262,#4e4e4e);border-color:#4a4a4a;color:#aaa">Raytrace</div>
<div class="w" style="left:1433px;top:819px;width:220px;height:19px;border-radius:9px;background:#6d6d6d;border-color:#505050;color:#444">Alpha: 1.000</div>
<div class="w" style="left:1433px;top:842px;width:220px;height:19px;border-radius:9px;background:#6d6d6d;border-color:#505050;color:#444">Specular: 1.000</div>
<div class="w ar" style="left:1662px;top:819px;width:221px;height:19px;border-radius:9px;background:linear-gradient(#858585,#8f8f8f);border-color:#505050;color:#3c3c3c">Fresnel: 0.000</div>
<div class="w sl" style="left:1662px;top:842px;width:221px;height:19px;background:linear-gradient(#858585,#8f8f8f);border-color:#505050;color:#333"><b style="width:22px;background:#6c6c6c"></b><span>Blend: 1.250</span></div>

<!-- Mirror/SSS -->
<div class="sep" style="top:872px"></div>
<div class="rt" style="top:878px"></div><div class="ck" style="left:1450px;top:876px"></div><div class="t h" style="left:1470px;top:876px">Mirror</div><div class="gr" style="top:874px"></div>
<div class="sep" style="top:896px"></div>
<div class="rt" style="top:902px"></div><div class="ck" style="left:1450px;top:900px"></div><div class="t h" style="left:1470px;top:900px">Subsurface Scattering</div><div class="gr" style="top:898px"></div>

<!-- Strand -->
<div class="sep" style="top:919px"></div>
<div class="dn" style="top:926px"></div><div class="t h" style="left:1450px;top:924px">Strand</div><div class="gr" style="top:922px"></div>
<div class="t k" style="left:1438px;top:953px">Size:</div>
<div class="t k" style="left:1667px;top:953px">Shading:</div>
<div class="w num ar" style="left:1433px;top:970px;width:220px;height:19px;border-radius:9px 9px 0 0">Root: 1.00000</div>
<div class="w num ar" style="left:1433px;top:988px;width:220px;height:21px;border-radius:0">Tip: 1.00000</div>
<div class="w num ar" style="left:1433px;top:1008px;width:220px;height:21px;border-radius:0 0 9px 9px">Minimum: 0.001</div>
<div class="ck" style="left:1436px;top:1032px"></div><div class="t k" style="left:1455px;top:1033px">Blender Units</div>
<div class="ck" style="left:1436px;top:1054px"></div>
<svg style="left:1437px;top:1052px" width="15" height="14"><path d="M2 7 6 11 13 2" stroke="#eee" stroke-width="2" fill="none"/></svg>
<div class="t c k" style="left:1455px;top:1055px">Tangent Shading</div>
<div class="w num ar" style="left:1433px;top:1073px;width:220px;height:19px">Shape: 0.000</div>
<div class="w num ar" style="left:1662px;top:972px;width:221px;height:19px">Width Fade: 0.000</div>
<div class="w fd" style="left:1662px;top:993px;width:221px;height:20px;border-radius:4px"><svg style="left:3px;top:2px" width="14" height="14"><circle cx="7" cy="7" r="6" fill="#eee" stroke="#222"/><path d="M3 3h4v4H3zM7 7h4v4H7z" fill="#222"/></svg></div>
<div class="t k" style="left:1667px;top:1027px">Surface diffuse:</div>
<div class="w num ar" style="left:1662px;top:1046px;width:221px;height:19px">Distance: 0.000</div>

<!-- Options -->
<div class="sep" style="top:1103px"></div>
<div class="dn" style="top:1110px"></div><div class="t h" style="left:1450px;top:1108px">Options</div><div class="gr" style="top:1106px"></div>
<div style="left:1426px;top:1122px;width:6px;height:7px;background:repeating-linear-gradient(135deg,#ccc 0 1px,transparent 1px 3px);clip-path:polygon(0 0,100% 100%,0 100%)"></div>
</body></html>
